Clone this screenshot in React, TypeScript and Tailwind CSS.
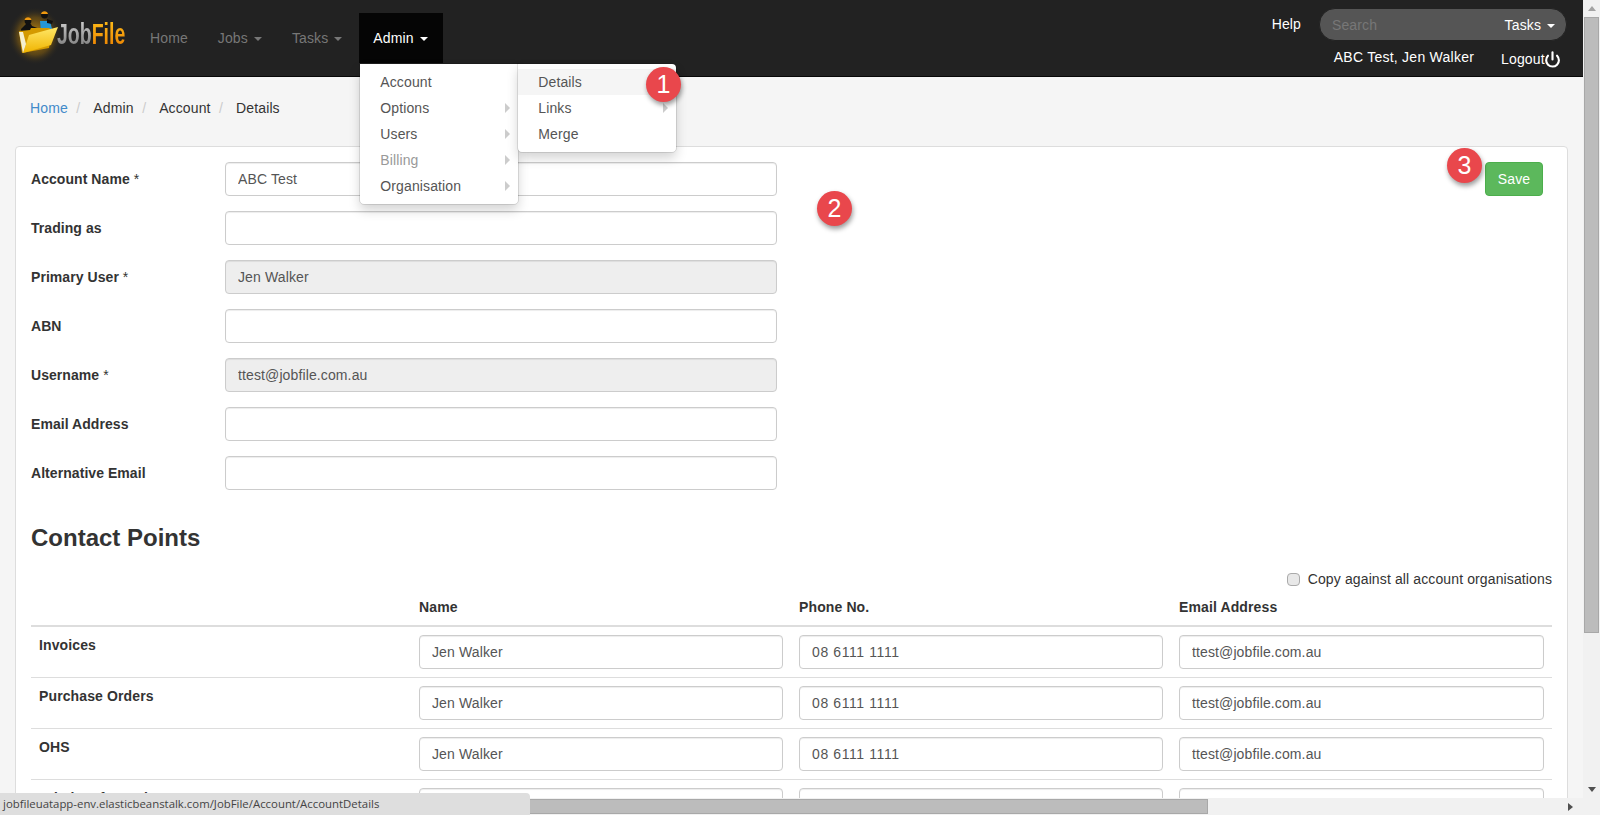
import { Power } from "lucide-react"

const formRows = [
  { label: "Account Name", required: true, value: "ABC Test" },
  { label: "Trading as", value: "" },
  { label: "Primary User", required: true, value: "Jen Walker", disabled: true },
  { label: "ABN", value: "" },
  { label: "Username", required: true, value: "ttest@jobfile.com.au", disabled: true },
  { label: "Email Address", value: "" },
  { label: "Alternative Email", value: "" },
]

const contactRows = ["Invoices", "Purchase Orders", "OHS", "Admin Information"]

function Caret() {
  return <span className="ml-[6px] inline-block align-middle border-x-4 border-t-4 border-x-transparent border-t-current" />
}

function Badge({ n, className }: { n: number; className: string }) {
  return (
    <div className={`absolute z-30 flex size-[35px] items-center justify-center rounded-full bg-[#e9474c] text-[25px] text-white shadow-[1px_3px_5px_rgba(0,0,0,0.4)] ${className}`}>
      {n}
    </div>
  )
}

function TextInput({ value, disabled, wide }: { value: string; disabled?: boolean; wide?: boolean }) {
  return (
    <input
      readOnly
      value={value}
      className={`block h-[34px] w-full rounded border border-[#ccc] px-3 text-sm text-[#555] shadow-[inset_0_1px_1px_rgba(0,0,0,0.075)] ${wide ? "tracking-[0.6px]" : "tracking-[0.12px]"} ${disabled ? "bg-[#eee]" : "bg-white"}`}
    />
  )
}

function Logo() {
  return (
    <div className="relative h-[76px] w-[135px] shrink-0">
      <svg className="absolute left-0 top-0" width="70" height="70" viewBox="0 0 70 70">
        <defs>
          <radialGradient id="glow" cx="50%" cy="50%" r="50%">
            <stop offset="0%" stopColor="#e0a010" stopOpacity="0.9" />
            <stop offset="65%" stopColor="#a87408" stopOpacity="0.4" />
            <stop offset="100%" stopColor="#222" stopOpacity="0" />
          </radialGradient>
          <linearGradient id="folder" x1="0" y1="0" x2="0" y2="1">
            <stop offset="0%" stopColor="#ffe768" />
            <stop offset="100%" stopColor="#f0b400" />
          </linearGradient>
        </defs>
        <ellipse cx="35" cy="36" rx="27" ry="29" fill="url(#glow)" />
        <path d="M26 24c2-2 5-1 6 2l8 3-1 3-7-1-1 5-9 1-1-8z" fill="#111" />
        <circle cx="28" cy="21" r="3.4" fill="#111" />
        <path d="M24.5 20a3.6 3.6 0 0 1 7 0z" fill="#f09a10" />
        <path d="M40 21h10l2 8-3 3H41z" fill="#2496d6" />
        <path d="M47 19l6 2-1 3-5-1z" fill="#111" />
        <circle cx="44.5" cy="15" r="3.4" fill="#111" />
        <path d="M41 14a3.6 3.6 0 0 1 7 0z" fill="#f09a10" />
        <path d="M19 31l11-1 1-2 18 0 3 2-3 18-27 5z" fill="#d49a00" />
        <path d="M23 53l6-18 29-8-7 18z" fill="url(#folder)" />
        <path d="M19 32l4 21 3-9-3-12z" fill="#f5f0d0" />
      </svg>
      <div className="absolute left-[57px] top-[17px] origin-left scale-x-[0.65] whitespace-nowrap font-['Liberation_Sans',sans-serif] text-[30px] font-bold leading-[34px] tracking-normal">
        <span className="bg-gradient-to-b from-[#d8d8d8] to-[#777] bg-clip-text text-transparent">Job</span>
        <span className="bg-gradient-to-b from-[#ffc21a] to-[#e87c00] bg-clip-text text-transparent">File</span>
      </div>
    </div>
  )
}

function MenuItem({ label, arrow, muted, active }: { label: string; arrow?: boolean; muted?: boolean; active?: boolean }) {
  return (
    <li className={`relative h-[26px] pl-5 leading-[26px] ${muted ? "text-[#999]" : "text-[#555]"} ${active ? "bg-[#f5f5f5]" : ""}`}>
      {label}
      {arrow && <span className="absolute right-[8px] top-[8px] border-y-[5px] border-l-[5px] border-y-transparent border-l-[#ccc]" />}
    </li>
  )
}

function AdminMenu() {
  return (
    <li className="relative ml-[2px] mt-[13px] h-[50px] bg-[#050505] pl-[14px] pr-[15px] font-medium leading-[50px] text-white">
      Admin
      <Caret />
      <ul className="absolute left-px top-[51px] z-20 h-[140px] w-[158px] rounded-b bg-white py-[5px] font-normal shadow-[0_6px_12px_rgba(0,0,0,0.175)] outline outline-[rgba(0,0,0,0.1)]">
        <MenuItem label="Account" />
        <MenuItem label="Options" arrow />
        <MenuItem label="Users" arrow />
        <MenuItem label="Billing" arrow muted />
        <MenuItem label="Organisation" arrow />
        <ul className="absolute left-[158px] top-0 h-[88px] w-[158px] rounded-r rounded-b bg-white py-[5px] shadow-[0_6px_12px_rgba(0,0,0,0.175)] outline outline-[rgba(0,0,0,0.1)]">
          <MenuItem label="Details" active />
          <MenuItem label="Links" arrow />
          <MenuItem label="Merge" />
        </ul>
      </ul>
    </li>
  )
}

function Navbar() {
  return (
    <nav className="flex h-[77px] shrink-0 border-b border-[#080808] bg-[#222] pr-4">
      <Logo />
      <ul className="flex text-[#777]">
        <li className="px-[15px] pt-[13px] leading-[50px]">Home</li>
        <li className="px-[15px] pt-[13px] leading-[50px]">Jobs<Caret /></li>
        <li className="px-[15px] pt-[13px] leading-[50px]">Tasks<Caret /></li>
        <AdminMenu />
      </ul>
      <div className="ml-auto flex flex-col text-white">
        <div className="mt-[8px] flex h-[33px] items-center">
          <span className="mb-[2px] mr-[18px]">Help</span>
          <div className="flex h-[33px] w-[248px] items-center rounded-2xl border border-[#222] bg-[#555] pl-3 pr-[11px]">
            <input placeholder="Search" className="w-[150px] bg-transparent text-sm placeholder:text-[#777]" />
            <span className="ml-auto">Tasks<Caret /></span>
          </div>
        </div>
        <div className="mt-[6px] flex pl-[62px]">
          <span className="tracking-[0.25px]">ABC Test, Jen Walker</span>
          <span className="ml-[27px] mt-[2px] flex items-center">
            Logout
            <Power size={17} strokeWidth={3} className="-ml-px" />
          </span>
        </div>
      </div>
    </nav>
  )
}

function Breadcrumb() {
  return (
    <ol className="flex h-[69px] items-center pb-[7px] pl-[30px] text-[#333]">
      <li className="text-[#428bca]">Home</li>
      {["Admin", "Account", "Details"].map((crumb) => (
        <li key={crumb}>
          <span className="pl-[8.5px] pr-[13px] text-[#ccc]">/</span>
          {crumb}
        </li>
      ))}
    </ol>
  )
}

function ContactTable() {
  return (
    <table className="w-[1521px] table-fixed border-collapse text-left">
      <thead>
        <tr>
          <th className="w-[380px] border-b-2 border-[#ddd]" />
          <th className="w-[380px] border-b-2 border-[#ddd] p-2 font-bold">Name</th>
          <th className="w-[380px] border-b-2 border-[#ddd] p-2 font-bold">Phone No.</th>
          <th className="border-b-2 border-[#ddd] p-2 font-bold">Email Address</th>
        </tr>
      </thead>
      <tbody>
        {contactRows.map((row) => (
          <tr key={row} className="border-b border-[#ddd]">
            <td className="p-2 align-top font-bold">{row}</td>
            <td className="p-2"><TextInput value="Jen Walker" /></td>
            <td className="p-2"><TextInput value="08 6111 1111" wide /></td>
            <td className="p-2"><TextInput value="ttest@jobfile.com.au" /></td>
          </tr>
        ))}
      </tbody>
    </table>
  )
}

function AccountPanel() {
  return (
    <section className="mx-[15px] rounded border border-[#ddd] bg-white p-[15px]">
      <div className="flex items-start justify-between pr-[9px]">
        <div className="w-[746px]">
          {formRows.map((row) => (
            <div key={row.label} className="mb-[15px] flex items-center">
              <label className="w-[194px] shrink-0 font-bold tracking-[0.06px]">
                {row.label}
                {row.required && <span className="font-normal"> *</span>}
              </label>
              <TextInput value={row.value} disabled={row.disabled} />
            </div>
          ))}
        </div>
        <button className="h-[34px] w-[58px] rounded border border-[#4cae4c] bg-[#5cb85c] text-sm text-white">Save</button>
      </div>
      <h3 className="mt-[20px] text-2xl font-bold leading-[26px] tracking-normal">Contact Points</h3>
      <div className="mt-[18px] flex h-5 items-center justify-end">
        <input type="checkbox" className="mr-2 size-[13px] appearance-none rounded-sm border border-[#aaa] bg-[#e8e8e8]" />
        Copy against all account organisations
      </div>
      <ContactTable />
    </section>
  )
}

export default function App() {
  return (
    <div className="relative flex h-[815px] w-[1600px] flex-col overflow-hidden bg-[#f1f1f1] font-['Liberation_Sans',Arial,sans-serif] text-sm tracking-[0.12px] text-[#333]">
      <div className="flex min-h-0 flex-1">
        <main className="relative min-w-0 flex-1 overflow-hidden bg-[#f5f5f5]">
          <Navbar />
          <Breadcrumb />
          <AccountPanel />
          <Badge n={1} className="left-[646px] top-[67px]" />
          <Badge n={2} className="left-[817px] top-[191px]" />
          <Badge n={3} className="left-[1447px] top-[148px]" />
        </main>
        {/* vertical scrollbar */}
        <div className="flex w-[17px] shrink-0 flex-col items-center">
          <div className="flex h-[17px] items-center">
            <span className="border-x-4 border-b-[5px] border-x-transparent border-b-[#a3a3a3]" />
          </div>
          <div className="h-[616px] w-[15px] border border-[#a8a8a8] bg-[#bcbcbc]" />
          <div className="mt-auto flex h-[17px] items-center">
            <span className="border-x-4 border-t-[5px] border-x-transparent border-t-[#505050]" />
          </div>
        </div>
      </div>
      {/* horizontal scrollbar */}
      <div className="flex h-[17px] shrink-0 items-center">
        <div className="ml-[17px] h-[15px] w-[1191px] border border-[#a8a8a8] bg-[#bcbcbc]" />
        <span className="ml-[360px] border-y-4 border-l-[5px] border-y-transparent border-l-[#505050]" />
      </div>
      {/* browser status bubble */}
      <div className="absolute bottom-0 left-0 z-40 h-[22px] w-[530px] rounded-tr bg-[#dedede] pl-[3px] font-['Open_Sans',sans-serif] text-[11.4px] leading-[21px] tracking-normal text-[#444]">
        jobfileuatapp-env.elasticbeanstalk.com/JobFile/Account/AccountDetails
      </div>
    </div>
  )
}
